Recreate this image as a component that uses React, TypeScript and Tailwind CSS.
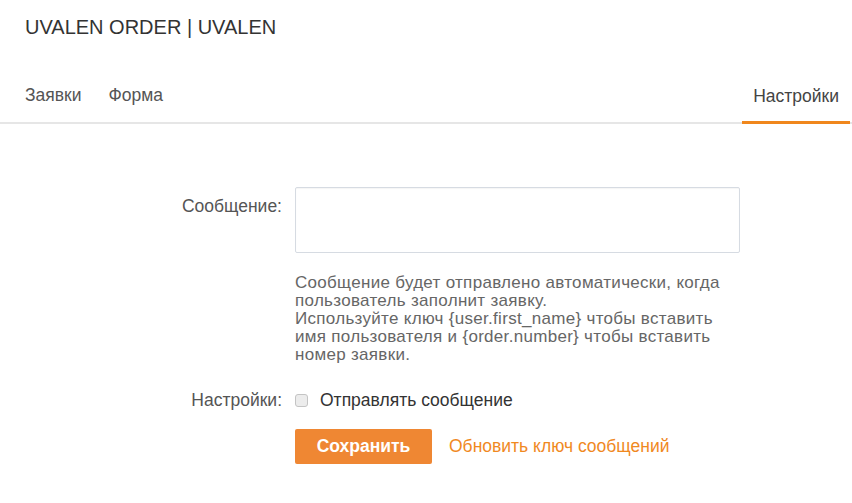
import { useState } from "react";

const tabs = ["Заявки", "Форма"];

export default function App() {
  const [message, setMessage] = useState("");
  const [sendMessage, setSendMessage] = useState(false);

  return (
    <div className="min-h-[503px] w-[852px] bg-white font-['Liberation_Sans',Arial,sans-serif] text-[#333]">
      <h1 className="px-[25px] pt-[15px] text-[20px] leading-[24px] text-[#333]">
        UVALEN ORDER | UVALEN
      </h1>

      {/* tabs */}
      <div className="mt-[46px] flex items-end border-b-2 border-[#e6e6e6] pl-[25px]">
        {tabs.map((t) => (
          <div key={t} className="mr-[27px] pb-[17px] text-[17.5px] leading-[20px] text-[#555]">
            {t}
          </div>
        ))}
        <div className="ml-auto -mb-[2px] mr-[2px] border-b-[3px] border-[#f0871c] px-[11px] pb-[15px] text-[17.5px] leading-[20px] text-[#444]">
          Настройки
        </div>
      </div>

      {/* form */}
      <div className="mt-[63px] grid grid-cols-[282px_445px] gap-x-[13px]">
        <label className="pt-[9px] text-right text-[17.5px] leading-[20px] text-[#555]">Сообщение:</label>
        <textarea
          value={message}
          onChange={(e) => setMessage(e.target.value)}
          className="h-[66px] resize-none rounded-[2px] border border-[#d6dbe2] px-2 py-1 text-[17px] shadow-[inset_0_1px_1px_rgba(0,0,0,0.04)] outline-none"
        />

        <div />
        <p className="mt-[21px] w-[440px] text-[17px] leading-[18px] tracking-[0.3px] text-[#666]">
          Сообщение будет отправлено автоматически, когда пользователь заполнит заявку.
          <br />
          Используйте ключ {"{user.first_name}"} чтобы вставить имя пользователя и {"{order.number}"} чтобы вставить номер заявки.
        </p>

        <label className="mt-[26px] text-right text-[17.5px] leading-[20px] text-[#555]">Настройки:</label>
        <label className="mt-[26px] flex items-center gap-[12px] text-[17.5px] leading-[20px] text-[#333]">
          <input
            type="checkbox"
            checked={sendMessage}
            onChange={(e) => setSendMessage(e.target.checked)}
            className="h-[13px] w-[13px] appearance-none rounded-[3px] border border-[#c4c4c4] bg-[#ececec] checked:border-[#ef8733] checked:bg-[#ef8733]"
          />
          Отправлять сообщение
        </label>

        <div />
        <div className="mt-[19px] flex items-center gap-[17px]">
          <button className="h-[35px] w-[137px] rounded-[2px] bg-[#ef8733] text-[17.5px] font-bold text-white">
            Сохранить
          </button>
          <a href="#" className="text-[17.5px] text-[#f0891f]">
            Обновить ключ сообщений
          </a>
        </div>
      </div>
    </div>
  );
}
